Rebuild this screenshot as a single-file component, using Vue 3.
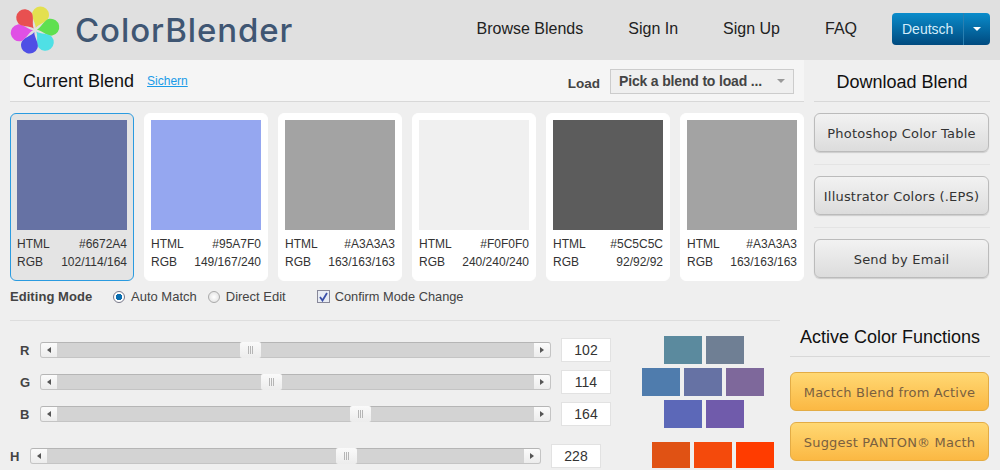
<script setup>
const petals = [
  { c: '#e3e04f', a: 20 }, { c: '#5fe050', a: 80 }, { c: '#4fe0e5', a: 140 },
  { c: '#4f4fe5', a: 200 }, { c: '#e050e5', a: 260 }, { c: '#e85050', a: 320 },
]
const nav = ['Browse Blends', 'Sign In', 'Sign Up', 'FAQ']
const cards = [
  { hex: '#6672A4', rgb: '102/114/164', active: true },
  { hex: '#95A7F0', rgb: '149/167/240' },
  { hex: '#A3A3A3', rgb: '163/163/163' },
  { hex: '#F0F0F0', rgb: '240/240/240' },
  { hex: '#5C5C5C', rgb: '92/92/92' },
  { hex: '#A3A3A3', rgb: '163/163/163' },
]
const sliders = [
  { l: 'R', v: 102, t: 199 },
  { l: 'G', v: 114, t: 220 },
  { l: 'B', v: 164, t: 309 },
  { l: 'H', v: 228, t: 305, hue: true },
]
const rows = [
  ['#5b8a9e', '#6f7f94'],
  ['#4f7cad', '#6672a4', '#7e689b'],
  ['#5c68b8', '#705bab'],
]
const warm = ['#e05214', '#f44a0c', '#ff3c00']
</script>

<template>
  <div class="page">
    <header class="top">
      <svg class="logo" width="52" height="50" viewBox="0 0 52 50">
        <g transform="translate(25 25)">
          <path v-for="p in petals" :key="p.a" :fill="p.c" :transform="`rotate(${p.a})`"
            d="M0 -2 C -1.5 -7 -8.5 -11 -8.5 -16 A8.5 8.5 0 1 1 8.5 -16 C 8.5 -11 1.5 -7 0 -2Z" />
        </g>
      </svg>
      <span class="brand">ColorBlender</span>
      <nav class="nav">
        <a v-for="n in nav" :key="n">{{ n }}</a>
      </nav>
      <div class="lang">
        <span class="lang-text">Deutsch</span>
        <span class="lang-caret"><i></i></span>
      </div>
    </header>

    <section class="upper">
      <div class="blend">
        <div class="bar">
          <h2>Current Blend</h2>
          <a class="save">Sichern</a>
          <span class="load">Load</span>
          <div class="select"><span>Pick a blend to load ...</span><i></i></div>
        </div>
        <div class="cards">
          <div v-for="(c, i) in cards" :key="i" class="card" :class="{ active: c.active }">
            <div class="swatch" :style="{ background: c.hex }"></div>
            <div class="info"><span>HTML</span><span>{{ c.hex }}</span></div>
            <div class="info"><span>RGB</span><span>{{ c.rgb }}</span></div>
          </div>
        </div>
      </div>
      <aside class="download">
        <h2>Download Blend</h2>
        <button class="btn grey">Photoshop Color Table</button>
        <hr />
        <button class="btn grey">Illustrator Colors (.EPS)</button>
        <hr />
        <button class="btn grey">Send by Email</button>
      </aside>
    </section>

    <div class="mode">
      <b>Editing Mode</b>
      <span class="radio on"></span><span class="opt first">Auto Match</span>
      <span class="radio"></span><span class="opt">Direct Edit</span>
      <span class="check">
        <svg width="9" height="10" viewBox="0 0 9 10"><path d="M1 5 L3.5 8.5 L8 1" fill="none" stroke="#3a4fa8" stroke-width="1.8" /></svg>
      </span>
      <span class="opt confirm">Confirm Mode Change</span>
    </div>

    <section class="lower">
      <div class="tools">
        <div class="sliders">
          <div v-for="s in sliders" :key="s.l" class="row" :class="{ hue: s.hue }">
            <span class="lbl">{{ s.l }}</span>
            <div class="track">
              <span class="end"><i class="left"></i></span>
              <span class="thumb" :style="{ left: s.t + 'px' }"></span>
              <span class="end r"><i class="right"></i></span>
            </div>
            <div class="num">{{ s.v }}</div>
          </div>
        </div>
        <div class="bricks">
          <div v-for="(r, i) in rows" :key="i" class="brow">
            <span v-for="c in r" :key="c" class="brick" :style="{ background: c }"></span>
          </div>
          <div class="brow warm">
            <span v-for="c in warm" :key="c" class="brick short" :style="{ background: c }"></span>
          </div>
        </div>
      </div>
      <aside class="active-fn">
        <h2>Active Color Functions</h2>
        <button class="btn gold">Mactch Blend from Active</button>
        <button class="btn gold">Suggest PANTON® Macth</button>
      </aside>
    </section>
  </div>
</template>

<style>
html, body { margin: 0; overflow: hidden; background: #efefef; }
</style>

<style scoped>
.page { width: 1000px; height: 470px; overflow: hidden; background: #efefef; font-family: "Liberation Sans", Arial, sans-serif; color: #333; }
h2 { margin: 0; font-weight: 400; font-size: 18px; color: #111; }

.top { height: 60px; background: #e0e0e0; display: flex; align-items: center; padding: 0 10px; box-sizing: border-box; }
.logo { margin-top: -1px; flex: none; }
.brand { margin-left: 13px; font-family: Inter, sans-serif; font-weight: 500; font-size: 33px; line-height: 40px; color: #3f5673; letter-spacing: 0.9px; margin-top: -1px; }
.nav { margin-left: auto; display: flex; gap: 45px; font-size: 16px; color: #222; margin-top: -2px; }
.lang { margin-left: 35px; width: 98px; height: 32px; border-radius: 4px; display: flex; align-items: center; background: linear-gradient(#0a8ccb, #004a7f); margin-top: -2px; }
.lang-text { width: 72px; box-sizing: border-box; padding-left: 10px; font-size: 14px; color: #d4ecfa; line-height: 32px; border-right: 1px solid #2a7fb0; }
.lang-caret { flex: 1; display: flex; justify-content: center; }
.lang-caret i { border: 4px solid transparent; border-top: 4px solid #fff; border-bottom: 0; width: 0; height: 0; }

.upper { display: flex; padding-left: 10px; height: 221px; }
.blend { width: 794px; }
.bar { height: 41px; background: #f5f5f5; border-bottom: 1px solid #d8d8d8; display: flex; align-items: center; padding: 0 10px 0 13px; }
.bar h2 { margin-top: 2px; }
.save { margin-left: 13px; margin-top: 1px; font-size: 12px; color: #1a9be8; text-decoration: underline; }
.load { margin-left: auto; font-size: 13.5px; font-weight: 700; color: #444; margin-top: 5px; }
.select { margin-left: 10px; width: 184px; height: 25px; box-sizing: border-box; border: 1px solid #ccc; background: #efefef; display: flex; align-items: center; justify-content: space-between; padding: 0 8px; font-size: 14px; letter-spacing: -0.17px; font-weight: 700; color: #444; margin-top: 1px; }
.select i { border: 4px solid transparent; border-top: 4px solid #999; border-bottom: 0; }
.cards { display: flex; gap: 10px; margin-top: 11px; }
.card { width: 124px; height: 168px; box-sizing: border-box; padding: 6px; background: #fff; border: 1px solid #fff; border-radius: 6px; }
.card.active { background: #e4e4e4; border-color: #2a9be0; }
.swatch { height: 110px; margin-bottom: 5px; }
.info { display: flex; justify-content: space-between; font-size: 12px; line-height: 18px; color: #333; }

.download { width: 176px; margin-left: 10px; }
.download h2 { height: 41px; line-height: 45px; text-align: center; border-bottom: 1px solid #d8d8d8; margin-bottom: 11px; }
.download hr { border: 0; border-top: 1px solid #e4e4e4; margin: 12px 0 11px; }
.btn { display: block; box-sizing: border-box; height: 39px; padding: 2px 0 0; border-radius: 6px; font-family: "DejaVu Sans", Verdana, sans-serif; font-size: 13px; letter-spacing: 0.2px; }
.grey { width: 175px; border: 1px solid #bbb; background: linear-gradient(#f2f2f2, #dcdcdc); color: #333; box-shadow: 0 1px 1px #ccc; }
.gold { width: 199px; border: 1px solid #e3ac45; background: linear-gradient(#ffd873, #fbb843); color: #7a6040; margin-bottom: 11px; }

.mode { height: 39px; box-sizing: border-box; padding: 6px 0 0 10px; display: flex; align-items: flex-start; line-height: 20px; }
.mode b { font-size: 13px; letter-spacing: 0.05px; color: #444; width: 103px; }
.opt { color: #444; font-size: 13px; }
.opt.first { margin-right: 11px; }
.opt.confirm { font-size: 12.8px; }
.radio { width: 12px; height: 12px; margin: 4px 6px 0 0; box-sizing: border-box; border-radius: 50%; border: 1px solid #aaa; background: radial-gradient(#fff, #ddd); }
.radio.on { background: radial-gradient(circle, #0a6eb0 0 3px, #fff 3.5px); border-color: #778; }
.check { width: 13px; height: 13px; margin: 3px 5px 0 31px; box-sizing: border-box; border: 1px solid #889; background: #e8ecf4; display: flex; align-items: center; justify-content: center; }

.lower { display: flex; padding-left: 10px; }
.tools { width: 770px; border-top: 1px solid #ddd; display: flex; height: 150px; }
.sliders { width: 601px; padding-top: 17px; display: flex; flex-direction: column; gap: 8px; flex: none; }
.row { display: flex; align-items: center; height: 24px; }
.row.hue { margin-top: 10px; margin-left: -10px; }
.lbl { width: 20px; margin-left: 10px; font-size: 13px; font-weight: 700; color: #444; }
.track { position: relative; width: 511px; height: 16px; box-sizing: border-box; background: #d3d3d3; border: 1px solid #c4c4c4; border-top-color: #b5b5b5; border-radius: 3px; display: flex; justify-content: space-between; }
.end { width: 16px; background: linear-gradient(#fbfbfb, #ececec); display: flex; align-items: center; justify-content: center; border-radius: 2px 0 0 2px; }
.end.r { border-radius: 0 2px 2px 0; }
.end i { width: 0; height: 0; border: 3px solid transparent; }
.end .left { border-right: 4px solid #555; border-left: 0; }
.end .right { border-left: 4px solid #555; border-right: 0; }
.thumb { position: absolute; top: -1px; width: 21px; height: 16px; border-radius: 2px; background: linear-gradient(90deg, transparent 8px, #b5b5b5 8px 9px, transparent 9px 10px, #b5b5b5 10px 11px, transparent 11px 12px, #b5b5b5 12px 13px, transparent 13px), linear-gradient(#fafafa, #ececec); background-size: 100% 8px, 100% 100%; background-position: 0 4px, 0 0; background-repeat: no-repeat; }
.num { margin-left: 10px; width: 50px; height: 24px; box-sizing: border-box; background: #fff; border: 1px solid #e2e2e2; font-size: 14px; line-height: 22px; text-align: center; color: #333; }
.bricks { margin-left: 31px; padding-top: 15px; width: 132px; flex: none; }
.brow { display: flex; gap: 4px; margin-bottom: 4px; padding-left: 22px; }
.brow:nth-child(2) { padding-left: 0; }
.brow.warm { margin: 14px 0 0; padding-left: 10px; }
.brick { width: 38px; height: 28px; }
.brick.short { height: 26px; }

.active-fn { width: 200px; margin-left: 10px; }
.active-fn h2 { height: 36px; line-height: 34px; text-align: center; border-bottom: 1px solid #d8d8d8; margin-bottom: 15px; }
</style>
